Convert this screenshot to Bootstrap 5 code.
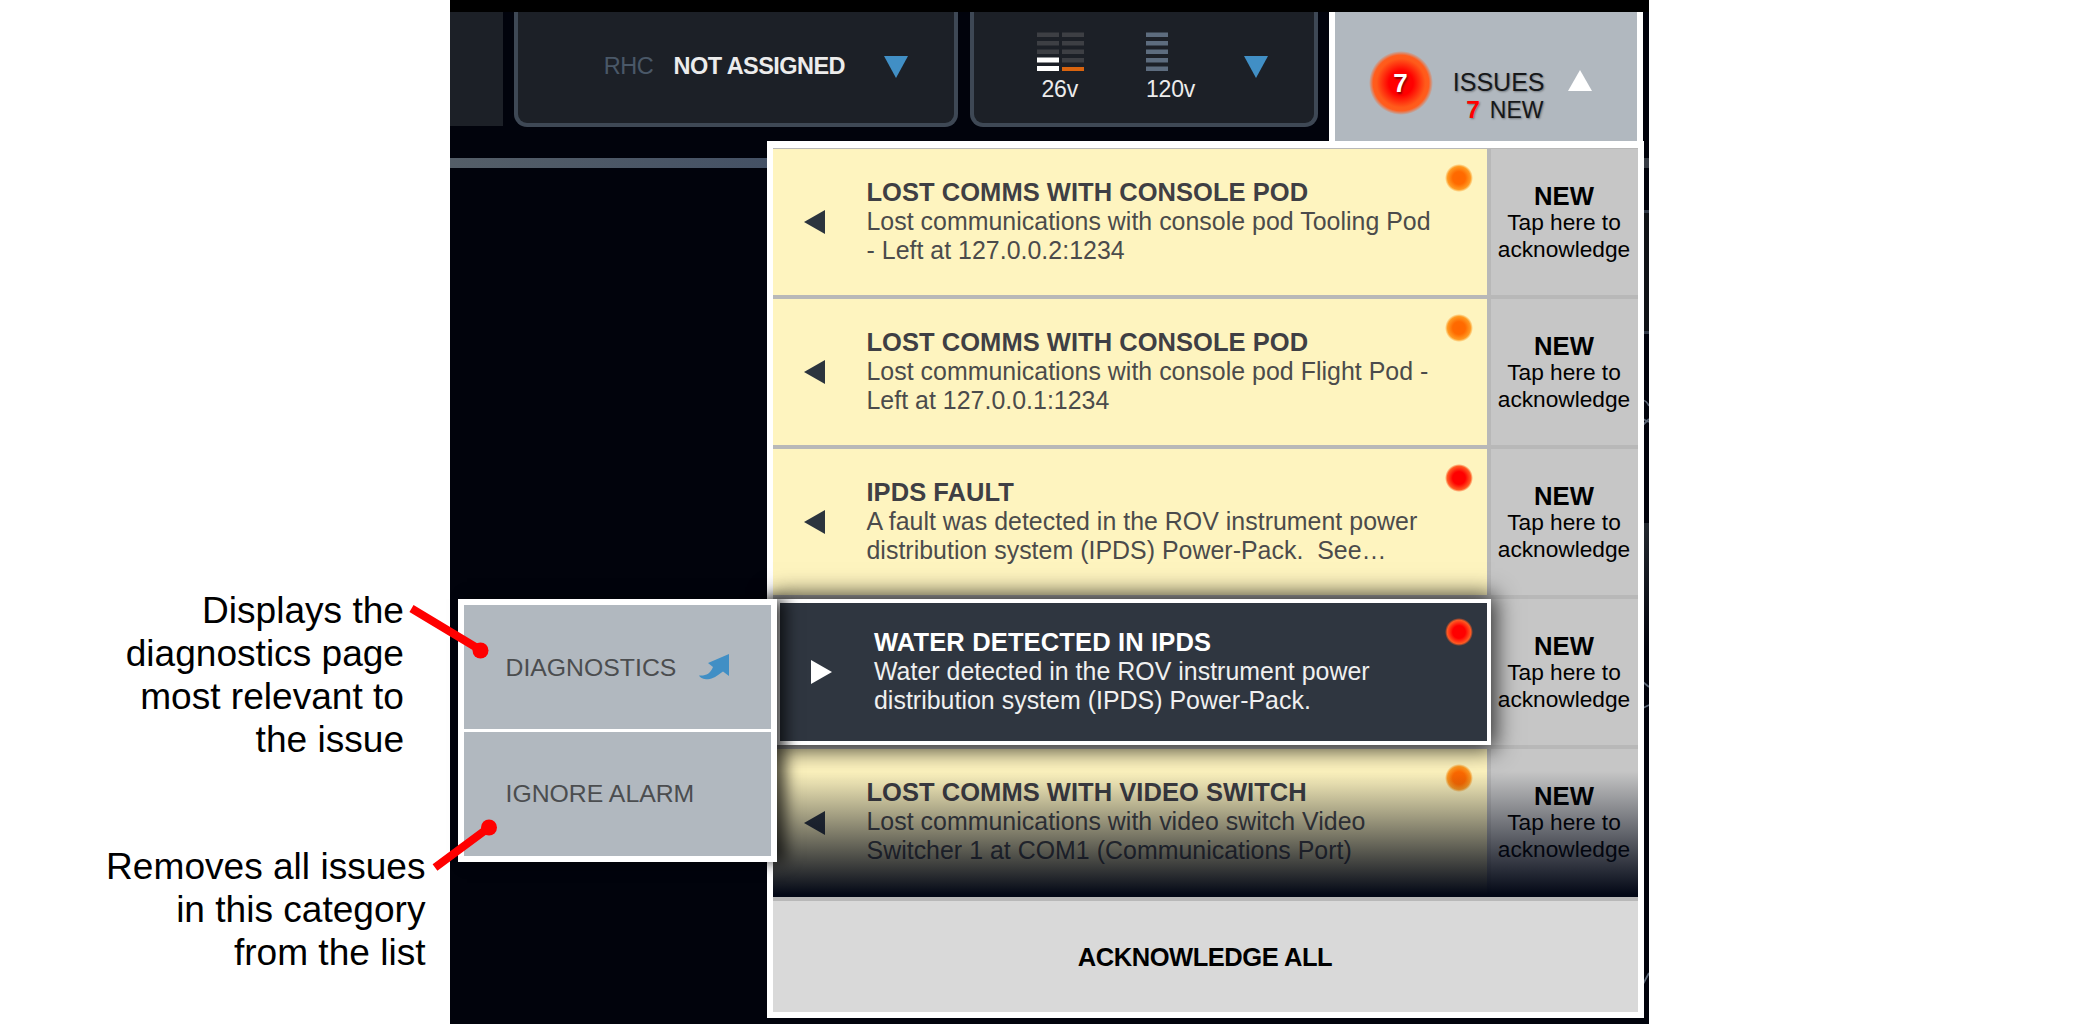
<!DOCTYPE html>
<html lang="en">
<head>
<meta charset="utf-8">
<title>Issues</title>
<link rel="stylesheet" href="https://cdn.jsdelivr.net/npm/bootstrap@5.3.0/dist/css/bootstrap.min.css">
<style>
body { width: 2100px; height: 1025px; overflow: hidden; font-family: "Liberation Sans", Arial, sans-serif; background: #fff; color: #000; }
.notes { width: 450px; padding-top: 589px; font-size: 37.1px; line-height: 43px; }
.note-a { width: 404px; height: 256px; }
.note-b { width: 425.5px; }
.console-app { width: 1199px; height: 1024px; background: #01030c; }
.top-strip { height: 12px; background: #000; }
.head-row { height: 129px; }
.tile { height: 115px; background: #1c2027; border: 4px solid #3e4855; border-top: 0; border-radius: 0 0 13px 13px; color: #ececec; }
.tile-stub { width: 53px; height: 114px; background: #1c2027; }
.tile-rhc { width: 444px; margin-left: 11px; padding: 41px 46px 0 0; font-size: 23.5px; line-height: 27px; letter-spacing: -.55px; }
.rhc-key { color: #4a5868; margin-right: 20.5px; }
.tile-rhc svg { margin: 2.5px 0 0 39px; }
.tile-volt { width: 348px; margin-left: 12px; padding-top: 20px; font-size: 23px; line-height: 27px; letter-spacing: -.2px; }
.volt-a { width: 47px; margin-left: 62.5px; }
.volt-b { width: 50px; margin-left: 62.5px; }
.volt-a div { padding-left: 5px; }
.volt-a div, .volt-b div { padding-top: 5px; }
.tile-volt .caret { margin: 23.5px 0 0 48px; }
.tile-issues { width: 314.5px; height: 129px; margin-left: 10.5px; background: #b1b8bf; border: solid #fff; border-width: 0 6.5px; padding: 31px 0 0 23px; }
.glow { width: 84px; height: 80px; }
.count-ball { width: 64px; height: 64px; margin: 8px 0 0 11px; border-radius: 50%; background: radial-gradient(circle closest-side, #f00 0, #f00 38%, #ff5a1a 76%, #ff5d1e 87%, rgba(255,93,30,0) 100%); color: #fff; font: bold 26px/64px "Liberation Sans", sans-serif; text-shadow: 1px 2px 2px rgba(90,0,0,.7); }
.issue-sum { width: 94px; margin: 25.5px 0 0 9px; color: #16181a; font-size: 25px; line-height: 27.6px; text-shadow: 1px 1px 2px rgba(0,0,0,.35); }
.issue-sum .sub-new { font-size: 23px; padding-right: 1px; }
.issue-sum b { color: #f00; font-size: 24.5px; margin-right: 10px; }
.tile-issues svg { margin: 27px 0 0 23px; }
.drop { width: 877px; height: 877px; margin-left: 316.5px; background: #b8b8b8; border: 6.5px solid #fff; border-top-width: 7px; padding-top: 1.3px; }
.issue { height: 150px; padding-bottom: 4px; }
.issue-main { width: 714px; margin-right: 4px; background: #fef4bf; color: #4b4b4b; padding-left: 31px; }
.issue-text { margin-left: 42px; width: 575px; font-size: 24.9px; line-height: 29.3px; letter-spacing: .03px; white-space: pre; }
.issue-text b { font-size: 25.5px; color: #3f3f44; display: block; height: 29.3px; letter-spacing: .04px; }
.issue-text { padding-bottom: 1px; }
.dot { right: 14px; top: 14.5px; width: 28px; height: 28px; border-radius: 50%; background: radial-gradient(circle closest-side, #ff6600 0, #ff6a00 45%, #ff9a22 82%, rgba(255,170,50,0) 100%); }
.dot.hot { background: radial-gradient(circle closest-side, #f00 0, #f00 45%, #ff5a22 84%, rgba(255,90,30,0) 100%); }
.ack { background: #c6c6c6; font-size: 22.7px; line-height: 26.6px; padding-top: 2px; }
.ack b { font-size: 25.7px; line-height: 25.5px; letter-spacing: .1px; }
.issue.open .issue-main { width: 714.5px; margin-left: 3.5px; margin-right: 0; border: 4px solid #fff; background: #2f3640; color: #f0f0f0; box-shadow: 0 0 22px 4px rgba(0,0,0,.8); z-index: 2; }
.issue.open .issue-text b { color: #fff; letter-spacing: .15px; }
.issue.last { height: 152px; }
.issue.last .issue-text { padding-bottom: 3px; }
.issue.last .ack { padding-top: 0; }
.fade-out { left: 0; right: 0; bottom: 4px; height: 126px; background: linear-gradient(rgba(3,8,22,0), rgba(3,8,22,.34) 33%, rgba(3,8,22,.7) 68%, #030816 98%); z-index: 3; }
.ack-all { height: 111px; background: #d9d9d9; font-size: 25.5px; letter-spacing: -.45px; padding-top: 1px; }
.side-menu { left: 7.5px; top: 599.3px; width: 319.5px; height: 262.7px; border: 6.3px solid #fff; background: #fff; box-shadow: 9px 0 14px rgba(0,0,0,.7); z-index: 5; font-size: 24.8px; color: #4b4d4f; gap: 2.5px; }
.side-menu > div { background: #b1b8bf; padding-left: 42px; }
.side-menu svg { margin-left: 22.5px; }
.backdrop-art, .callouts { left: 0; top: 0; }
.callouts { z-index: 9; }
.lift { z-index: 1; }
</style>
<script src="https://cdn.jsdelivr.net/npm/bootstrap@5.3.0/dist/js/bootstrap.bundle.min.js"></script>
</head>
<body class="d-flex position-relative">

<aside class="notes text-end flex-shrink-0">
  <div class="note-a">Displays the<br>diagnostics page<br>most relevant to<br>the issue</div>
  <div class="note-b">Removes all issues<br>in this category<br>from the list</div>
</aside>

<main class="console-app position-relative flex-shrink-0">
  <svg class="backdrop-art position-absolute" width="1199" height="1024" fill="none">
    <defs><linearGradient id="rail"><stop offset="0" stop-color="#545e68"/><stop offset="1" stop-color="#445165"/></linearGradient>
    <linearGradient id="edge" x2="0" y2="1"><stop offset="0" stop-color="#23292f"/><stop offset="1" stop-color="#01030c"/></linearGradient></defs>
    <rect y="158" width="320" height="10" fill="url(#rail)"/>
    <rect x="1190" y="158" width="9" height="10" fill="#383d45"/>
    <rect x="1190" y="211" width="9" height="121" fill="#101317"/>
    <path d="M1190 211.500h9M1190 332.500h9" stroke="#313a47" stroke-width="3"/>
    <rect x="1190" y="523" width="9" height="130" fill="url(#edge)"/>
    <path d="M1193 400q4 1 6 6M1193 425l6-6M1193 419l6 3M1193 682l6 5M1193 708l6-3M1193 984l6-11" stroke="#5b6675" stroke-width="1.800"/>
  </svg>

  <div class="position-relative lift">
    <div class="top-strip"></div>
    <header class="head-row d-flex align-items-start">
      <div class="tile-stub"></div>
      <div class="tile tile-rhc d-flex justify-content-end align-items-start flex-shrink-0">
        <span class="rhc-key">RHC</span><b>NOT ASSIGNED</b>
        <svg width="24" height="22"><path d="M0 0h24L12 22z" fill="#418fc5"/></svg>
      </div>
      <div class="tile tile-volt d-flex align-items-start flex-shrink-0">
        <div class="volt-a">
          <svg class="d-block" width="47" height="39"><g fill="#3d3f44"><path d="M0 .5h22v4.500H0zM0 9h22v4.500H0zM0 17.500h22v4.500H0zM25 .500h22v4.500H25zM25 9h22v4.500H25zM25 17.500h22v4.500H25zM25 26h22v4.500H25z"/></g><path d="M0 25.500h22v5H0zM0 34h22v5H0z" fill="#fff"/><path d="M25 35h22v4H25z" fill="#d9640f"/></svg>
          <div>26v</div>
        </div>
        <div class="volt-b">
          <svg class="d-block" width="22" height="39"><path d="M0 .5h22v4.500H0zM0 9h22v4.500H0zM0 17.500h22v4.500H0zM0 26h22v4.500H0zM0 34.500h22v4.500H0z" fill="#5d6c7e"/></svg>
          <div>120v</div>
        </div>
        <svg class="caret" width="24" height="22"><path d="M0 0h24L12 22z" fill="#418fc5"/></svg>
      </div>
      <div class="tile-issues d-flex align-items-start flex-shrink-0">
        <div class="glow flex-shrink-0"><div class="count-ball text-center">7</div></div>
        <div class="issue-sum text-end flex-shrink-0"><div>ISSUES</div><div class="sub-new"><b>7</b>NEW</div></div>
        <svg width="24" height="21"><path d="M12 0l12 21H0z" fill="#fff"/></svg>
      </div>
    </header>

    <section class="drop d-flex flex-column">
      <div class="issue d-flex">
        <div class="issue-main d-flex align-items-center position-relative flex-shrink-0">
          <svg width="21" height="24"><path d="M21 0v24L0 12z" fill="#2c343e"/></svg>
          <div class="issue-text"><b>LOST COMMS WITH CONSOLE POD</b>Lost communications with console pod Tooling Pod
- Left at 127.0.0.2:1234</div>
          <span class="dot position-absolute"></span>
        </div>
        <div class="ack flex-fill d-flex flex-column justify-content-center text-center"><b>NEW</b>Tap here to<br>acknowledge</div>
      </div>
      <div class="issue d-flex">
        <div class="issue-main d-flex align-items-center position-relative flex-shrink-0">
          <svg width="21" height="24"><path d="M21 0v24L0 12z" fill="#2c343e"/></svg>
          <div class="issue-text"><b>LOST COMMS WITH CONSOLE POD</b>Lost communications with console pod Flight Pod -
Left at 127.0.0.1:1234</div>
          <span class="dot position-absolute"></span>
        </div>
        <div class="ack flex-fill d-flex flex-column justify-content-center text-center"><b>NEW</b>Tap here to<br>acknowledge</div>
      </div>
      <div class="issue d-flex">
        <div class="issue-main d-flex align-items-center position-relative flex-shrink-0">
          <svg width="21" height="24"><path d="M21 0v24L0 12z" fill="#2c343e"/></svg>
          <div class="issue-text"><b>IPDS FAULT</b>A fault was detected in the ROV instrument power
distribution system (IPDS) Power-Pack.  See…</div>
          <span class="dot hot position-absolute"></span>
        </div>
        <div class="ack flex-fill d-flex flex-column justify-content-center text-center"><b>NEW</b>Tap here to<br>acknowledge</div>
      </div>
      <div class="issue open d-flex">
        <div class="issue-main d-flex align-items-center position-relative flex-shrink-0">
          <svg width="21" height="24"><path d="M0 0v24L21 12z" fill="#fff"/></svg>
          <div class="issue-text"><b>WATER DETECTED IN IPDS</b>Water detected in the ROV instrument power
distribution system (IPDS) Power-Pack.</div>
          <span class="dot hot position-absolute"></span>
        </div>
        <div class="ack flex-fill d-flex flex-column justify-content-center text-center"><b>NEW</b>Tap here to<br>acknowledge</div>
      </div>
      <div class="issue last d-flex position-relative">
        <div class="issue-main d-flex align-items-center position-relative flex-shrink-0">
          <svg width="21" height="24"><path d="M21 0v24L0 12z" fill="#2c343e"/></svg>
          <div class="issue-text"><b>LOST COMMS WITH VIDEO SWITCH</b>Lost communications with video switch Video
Switcher 1 at COM1 (Communications Port)</div>
          <span class="dot position-absolute"></span>
        </div>
        <div class="ack flex-fill d-flex flex-column justify-content-center text-center"><b>NEW</b>Tap here to<br>acknowledge</div>
        <div class="fade-out position-absolute"></div>
      </div>
      <div class="ack-all fw-bold d-flex align-items-center justify-content-center">ACKNOWLEDGE ALL</div>
    </section>
  </div>

  <nav class="side-menu position-absolute d-flex flex-column">
    <div class="flex-fill d-flex align-items-center">DIAGNOSTICS
      <svg width="32" height="26"><path d="M30 0v22l-6-4.500C18 22 14 25 9 25.200 5 25.300 1 24 0 21.500c7 .5 11-1.500 14-8.500L9 9z" fill="#418fc5"/></svg>
    </div>
    <div class="flex-fill d-flex align-items-center">IGNORE ALARM</div>
  </nav>
</main>

<svg class="callouts position-absolute" width="2100" height="1025" fill="#f00" stroke="#f00">
  <path d="M411.500 608.500L480.500 650M435 867.500L489 827.500" stroke-width="8"/>
  <circle cx="480.500" cy="650.500" r="8" stroke="none"/><circle cx="489" cy="827.500" r="8" stroke="none"/>
</svg>
</body>
</html>
